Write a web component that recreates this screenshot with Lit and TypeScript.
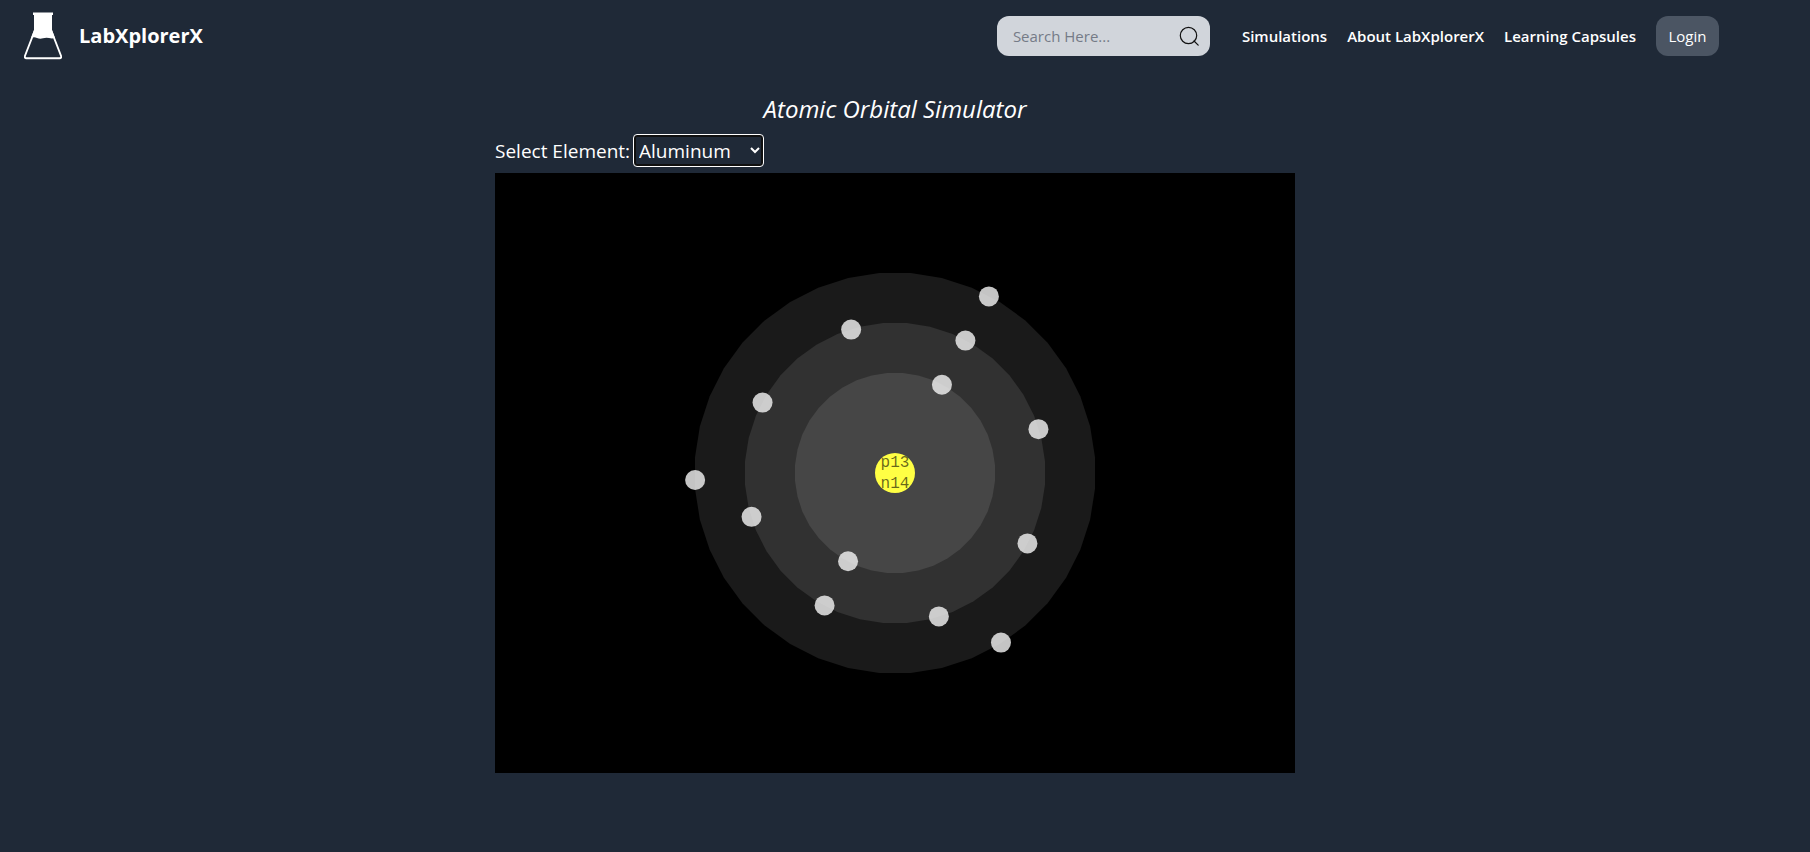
import { LitElement, html, css, svg } from "lit";
import { customElement, state } from "lit/decorators.js";

interface ChemicalElement {
  name: string;
  protons: number;
  neutrons: number;
  shells: number[];
}

const ELEMENTS: ChemicalElement[] = [
  { name: "Hydrogen", protons: 1, neutrons: 0, shells: [1] },
  { name: "Helium", protons: 2, neutrons: 2, shells: [2] },
  { name: "Lithium", protons: 3, neutrons: 4, shells: [2, 1] },
  { name: "Beryllium", protons: 4, neutrons: 5, shells: [2, 2] },
  { name: "Boron", protons: 5, neutrons: 6, shells: [2, 3] },
  { name: "Carbon", protons: 6, neutrons: 6, shells: [2, 4] },
  { name: "Nitrogen", protons: 7, neutrons: 7, shells: [2, 5] },
  { name: "Oxygen", protons: 8, neutrons: 8, shells: [2, 6] },
  { name: "Fluorine", protons: 9, neutrons: 10, shells: [2, 7] },
  { name: "Neon", protons: 10, neutrons: 10, shells: [2, 8] },
  { name: "Sodium", protons: 11, neutrons: 12, shells: [2, 8, 1] },
  { name: "Magnesium", protons: 12, neutrons: 12, shells: [2, 8, 2] },
  { name: "Aluminum", protons: 13, neutrons: 14, shells: [2, 8, 3] },
];

const CENTER_X = 400;
const CENTER_Y = 300;
const START_ANGLE = -62;
const RING_SIDES = 40;

const shellRadius = (index: number) => 100 + index * 50;

function pointAt(radius: number, degrees: number) {
  const a = (degrees * Math.PI) / 180;
  return { x: CENTER_X + radius * Math.cos(a), y: CENTER_Y + radius * Math.sin(a) };
}

/* A regular polygon whose flat sides touch the shell radius. */
function ringPoints(radius: number) {
  const corner = radius / Math.cos(Math.PI / RING_SIDES);
  return Array.from({ length: RING_SIDES }, (_, i) => {
    const p = pointAt(corner, ((i + 0.5) * 360) / RING_SIDES);
    return `${p.x.toFixed(1)},${p.y.toFixed(1)}`;
  }).join(" ");
}

@customElement("atom-view")
class AtomView extends LitElement {
  static properties = { atom: { attribute: false } };
  declare atom: ChemicalElement;

  static styles = css`
    :host { display: block; }
    .stage { display: block; width: 100%; background: #000; }
    .ring { fill: #fff; fill-opacity: 0.1; }
    .electron { fill: #f5f5f5; fill-opacity: 0.8; }
    .nucleus { fill: #ffff44; }
    .count {
      font: 16px "Liberation Mono", monospace;
      fill: #000;
      fill-opacity: 0.6;
      text-anchor: middle;
    }
  `;

  render() {
    const { shells, protons, neutrons } = this.atom;
    const rings = shells.map((_, i) => shellRadius(i)).reverse();
    return html`
      <svg class="stage" viewBox="0 0 800 600" role="img" aria-label="Electron shells">
        ${rings.map((r) => svg`<polygon class="ring" points=${ringPoints(r)} />`)}
        ${shells.map((count, i) =>
          Array.from({ length: count }, (_, n) => {
            const p = pointAt(shellRadius(i), START_ANGLE + (n * 360) / count);
            return svg`<circle class="electron" cx=${p.x} cy=${p.y} r="10" />`;
          })
        )}
        <circle class="nucleus" cx="400" cy="300" r="20" />
        <text class="count" x="400" y="294">p${protons}</text>
        <text class="count" x="400" y="315">n${neutrons}</text>
      </svg>
    `;
  }
}

@customElement("app-root")
class AppRoot extends LitElement {
  @state() private selected = "Aluminum";

  static styles = css`
    :host {
      display: block;
      min-height: 100vh;
      background: #1f2937;
      color: #fff;
      font-family: "Open Sans", "Noto Sans", sans-serif;
      font-size: 16px;
      line-height: 24px;
    }
    * { box-sizing: border-box; }
    .header {
      display: flex;
      align-items: center;
      justify-content: space-between;
      padding: 12px 91px 12px 24px;
    }
    .brand {
      display: flex;
      align-items: center;
      gap: 17px;
      color: inherit;
      text-decoration: none;
      font-size: 20px;
      font-weight: 700;
    }
    .flask { display: block; width: 38px; height: 48px; }
    .nav { display: flex; align-items: center; gap: 20px; font-size: 15px; }
    .search {
      display: flex;
      align-items: center;
      width: 213px;
      height: 40px;
      margin-right: 12px;
      padding: 0 10px 0 16px;
      border-radius: 12px;
      background: #d1d5db;
    }
    .search-input {
      flex: 1;
      min-width: 0;
      padding: 0;
      border: 0;
      outline: 0;
      background: transparent;
      color: #111827;
      font: inherit;
    }
    .search-input::placeholder { color: #757b87; opacity: 1; }
    .search-button { display: flex; padding: 0; border: 0; background: none; color: #111; }
    .link { color: inherit; text-decoration: none; font-weight: 600; }
    .login {
      min-width: 63px;
      height: 40px;
      padding: 0 12px;
      border: 0;
      border-radius: 12px;
      background: #4b5563;
      color: inherit;
      font: inherit;
    }
    .main { padding: 20px 20px 0 0; }
    .simulator { max-width: 800px; margin: 0 auto; }
    .title {
      margin: 0;
      text-align: center;
      font-size: 24px;
      font-style: italic;
      font-weight: 400;
      line-height: 34px;
    }
    .picker { display: flex; align-items: center; gap: 3px; padding: 8px 0 6px; font-size: 19px; }
    .select {
      width: 131px;
      height: 33px;
      padding: 0 3px 0 1px;
      border: 1px solid #fff;
      border-radius: 4px;
      outline: 0;
      box-shadow: inset 0 0 0 2px #101010;
      background: #1f2937;
      color: inherit;
      font: inherit;
    }
  `;

  private onSelect(e: Event) {
    this.selected = (e.target as HTMLSelectElement).value;
  }

  render() {
    const atom = ELEMENTS.find((el) => el.name === this.selected)!;
    return html`
      <header class="header">
        <a class="brand" href="#">
          <svg class="flask" viewBox="0 0 38 48" aria-hidden="true">
            <path fill="#fff" d="M9 .6h20v2.400h-1v15l3 8q-3 .8-6 0t-6 .3-6-.3-6 0l3-8V3H9z" />
            <path fill="none" stroke="#fff" stroke-width="1.900" stroke-linejoin="round"
              d="M11 18 1.100 43.500c-.6 1.700-.2 2.700 1.300 2.700h33.200c1.500 0 1.900-1 1.300-2.700L27 18" />
          </svg>
          <span>LabXplorerX</span>
        </a>
        <nav class="nav">
          <form class="search" role="search" @submit=${(e: Event) => e.preventDefault()}>
            <input class="search-input" type="text" aria-label="Search" placeholder="Search Here..." />
            <button class="search-button" type="submit" aria-label="Search">
              <svg width="21" height="21" viewBox="0 0 21 21" fill="none" stroke="currentColor" stroke-width="1.200" stroke-linecap="round">
                <circle cx="9.500" cy="9.500" r="8.200" />
                <path d="m15 15 4.200 4.200" />
              </svg>
            </button>
          </form>
          <a class="link" href="#simulations">Simulations</a>
          <a class="link" href="#about">About LabXplorerX</a>
          <a class="link" href="#capsules">Learning Capsules</a>
          <button class="login" type="button">Login</button>
        </nav>
      </header>
      <main class="main">
        <div class="simulator">
          <h1 class="title">Atomic Orbital Simulator</h1>
          <div class="picker">
            <label for="element">Select Element:</label>
            <select class="select" id="element" @change=${this.onSelect}>
              ${ELEMENTS.map(
                (el) => html`<option value=${el.name} ?selected=${el.name === this.selected}>${el.name}</option>`
              )}
            </select>
          </div>
          <atom-view .atom=${atom}></atom-view>
        </div>
      </main>
    `;
  }
}
